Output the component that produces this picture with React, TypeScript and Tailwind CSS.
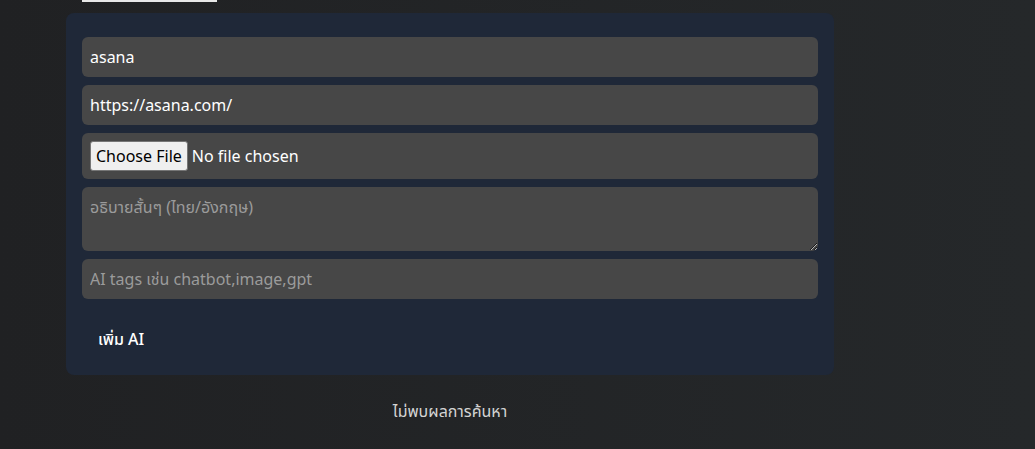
import { useState } from "react";

export default function App() {
  const [name, setName] = useState("asana");
  const [url, setUrl] = useState("https://asana.com/");
  const [desc, setDesc] = useState("");
  const [tags, setTags] = useState("");

  const field =
    "w-full h-10 rounded-md bg-[#474747] px-2 text-base text-white placeholder:text-[#9b9b9b] outline-none";

  return (
    <div className="min-h-screen bg-gradient-to-r from-[#202123] to-[#25282a] font-['Segoe_UI','Noto_Sans','Noto_Sans_Thai',sans-serif]">
      <div className="ml-[66px] w-[768px]">
        {/* ขอบล่างของปุ่มด้านบน */}
        <div className="ml-4 h-[2px] w-[135px] bg-[#e8e8e8]" />

        <form
          className="mt-[11px] rounded-lg bg-[#1f2838] px-4 pt-6 pb-3"
          onSubmit={e => e.preventDefault()}
        >
          <div className="flex flex-col gap-2">
            <input className={field} value={name} onChange={e => setName(e.target.value)} />
            <input className={field} value={url} onChange={e => setUrl(e.target.value)} />
            <div className="rounded-md bg-[#474747] px-2 py-2">
              <input type="file" className="text-base text-white file:mr-1 file:rounded-[3px] file:border file:border-[#767676] file:bg-[#efefef] file:px-[5px] file:py-[2px] file:text-base file:text-black" />
            </div>
            <textarea
              className="h-16 w-full resize-y rounded-md bg-[#474747] px-2 py-2 text-base text-white placeholder:text-[#9b9b9b] outline-none"
              placeholder="อธิบายสั้นๆ (ไทย/อังกฤษ)"
              value={desc}
              onChange={e => setDesc(e.target.value)}
            />
            <input
              className={field}
              placeholder="AI tags เช่น chatbot,image,gpt"
              value={tags}
              onChange={e => setTags(e.target.value)}
            />
          </div>
          <button type="submit" className="mt-4 px-4 py-3 text-base font-medium text-white">
            เพิ่ม AI
          </button>
        </form>

        <p className="mt-6 text-center text-base text-[#d4d4d4]">ไม่พบผลการค้นหา</p>
      </div>
    </div>
  );
}
